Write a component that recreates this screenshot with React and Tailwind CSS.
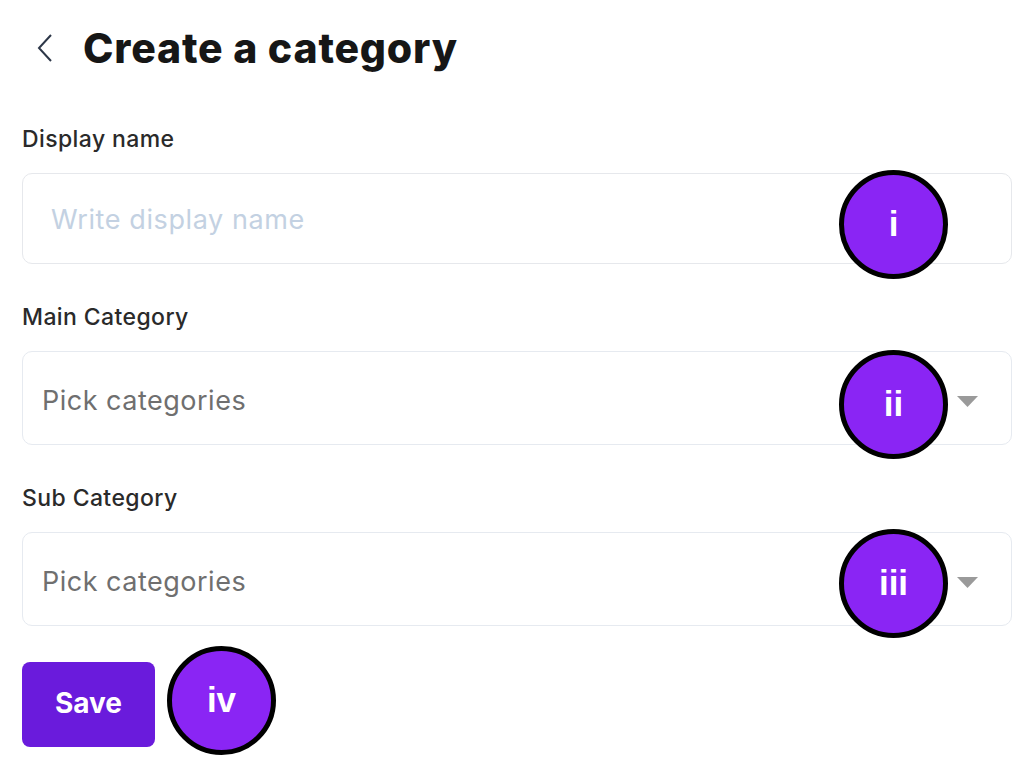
import React from 'react';

const Caret = () => (
  <svg width="21" height="11" viewBox="0 0 21 11" className="shrink-0">
    <path d="M0 0 L21 0 L10.5 11 Z" fill="#9a9a9a" />
  </svg>
);

// annotation badges drawn over the form
const Marker = ({ label, className }) => (
  <div
    className={`absolute flex h-[109px] w-[109px] items-center justify-center rounded-full border-[5px] border-black bg-[#8a25f4] text-[35px] font-bold text-white ${className}`}
    style={{ fontFamily: '"Liberation Sans", Arial, sans-serif' }}
  >
    {label}
  </div>
);

const Label = ({ children }) => (
  <label className="block text-[23px] leading-[28px] font-medium tracking-[0.4px] text-[#2a2a2a]">{children}</label>
);

const Field = ({ label, children }) => (
  <div className="flex flex-col gap-[20px]">
    <Label>{label}</Label>
    {children}
  </div>
);

const SelectBox = ({ placeholder }) => (
  <div className="flex h-[94px] items-center justify-between rounded-[10px] border border-[#e6eaf0] bg-white pl-[19px] pr-[33px] pt-[6px]">
    <span className="text-[27px] tracking-[0.5px] text-[#6f6f6f]">{placeholder}</span>
    <Caret />
  </div>
);

export default function App() {
  return (
    <div
      className="relative min-h-[761px] w-[1024px] bg-white pl-[22px] pr-[12px] pt-[26px] text-[#111]"
      style={{ fontFamily: 'Inter, "Noto Sans", sans-serif' }}
    >
      {/* Header */}
      <div className="flex h-[44px] items-center">
        <svg width="20" height="30" viewBox="0 0 20 30" className="ml-[14px]">
          <path d="M15 2 L3 15 L15 28" fill="none" stroke="#2d3748" strokeWidth="2" />
        </svg>
        <h1 className="ml-[27px] text-[41px] leading-[44px] font-extrabold tracking-[0.8px] text-[#161616]">
          Create a category
        </h1>
      </div>

      <div className="mt-[55px] flex flex-col gap-[39px]">
        <Field label="Display name">
          <div className="flex h-[91px] items-center rounded-[10px] border border-[#e6e8ec] bg-white pl-[28px] pt-[4px]">
            <span className="text-[27px] tracking-[0.6px] text-[#c3d1e2]">Write display name</span>
          </div>
        </Field>
        <Field label="Main Category">
          <SelectBox placeholder="Pick categories" />
        </Field>
        <Field label="Sub Category">
          <SelectBox placeholder="Pick categories" />
        </Field>
      </div>

      <button className="mt-[36px] h-[85px] w-[133px] rounded-[8px] bg-[#6a1bdc] pb-[4px] text-[28px] font-bold text-white">
        Save
      </button>

      <Marker label="i" className="left-[839px] top-[170px]" />
      <Marker label="ii" className="left-[839px] top-[350px]" />
      <Marker label="iii" className="left-[839px] top-[529px]" />
      <Marker label="iv" className="left-[167px] top-[646px]" />
    </div>
  );
}
